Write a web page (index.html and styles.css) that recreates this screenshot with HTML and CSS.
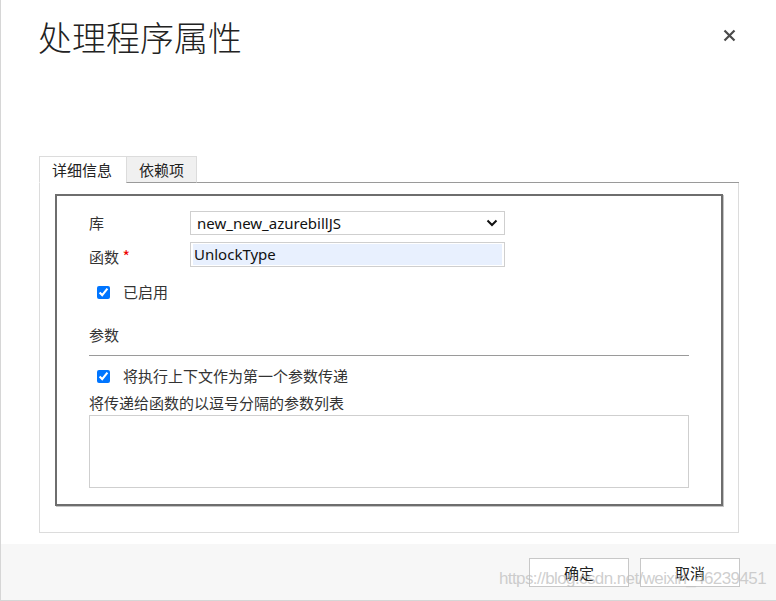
FILE: index.html
```html
<!DOCTYPE html>
<html lang="zh-CN">
<head>
  <meta charset="UTF-8">
  <meta name="viewport" content="width=device-width, initial-scale=1.0">
  <title>处理程序属性</title>
  <link rel="stylesheet" href="styles.css">
</head>
<body>
  <div class="dialog">
    <div class="header">
      <h1 class="title">处理程序属性</h1>
      <button class="close" title="关闭">
        <svg width="13" height="13" viewBox="0 0 13 13"><path d="M1.5 1.5 L11.5 11.5 M11.5 1.5 L1.5 11.5" stroke="#4a4a4a" stroke-width="2.2" fill="none"/></svg>
      </button>
    </div>

    <div class="content">
      <div class="tabs">
        <div class="tab active">详细信息</div>
        <div class="tab">依赖项</div>
        <div class="tab-fill"></div>
      </div>

      <div class="panel">
        <div class="group">
          <div class="row">
            <label class="field-label" for="library">库</label>
            <div class="select-box">
              <span id="library">new_new_azurebillJS</span>
              <svg width="12" height="8" viewBox="0 0 12 8"><path d="M1.5 1.5 L6 6 L10.5 1.5" stroke="#111" stroke-width="2" fill="none"/></svg>
            </div>
          </div>
          <div class="row row-func">
            <label class="field-label field-label-func" for="func">函数 <span class="req">*</span></label>
            <div class="text-box"><span id="func">UnlockType</span></div>
          </div>

          <label class="check check-enabled"><input type="checkbox" checked> 已启用</label>

          <div class="section-title">参数</div>
          <div class="rule"></div>

          <label class="check check-context"><input type="checkbox" checked> 将执行上下文作为第一个参数传递</label>
          <div class="hint">将传递给函数的以逗号分隔的参数列表</div>
          <textarea class="args"></textarea>
        </div>
      </div>
    </div>

    <div class="footer">
      <button class="btn">确定</button>
      <button class="btn">取消</button>
      <div class="watermark">https://blog.csdn.net/weixin_46239451</div>
    </div>
  </div>
</body>
</html>
```

FILE: styles.css
```css
body {
  margin: 0;
  font-family: "Noto Sans CJK SC", "Noto Sans", sans-serif;
  color: #333;
  background: #fff;
}
.dialog {
  width: 776px;
  height: 601px;
  box-sizing: border-box;
  border-left: 1px solid #d6d6d6;
  border-bottom: 1px solid #d6d6d6;
  display: flex;
  flex-direction: column;
  position: relative;
}
.header {
  display: flex;
  justify-content: space-between;
  align-items: flex-start;
  padding: 14px 40px 0 37px;
}
.title {
  margin: 0;
  font-size: 34px;
  font-weight: 300;
  line-height: 46px;
  color: #222;
}
.close {
  border: none;
  background: none;
  padding: 0;
  margin-top: 15px;
  cursor: pointer;
}
.content {
  padding: 0 37px 0 38px;
  margin-top: 96px;
}
.tabs {
  display: flex;
  height: 27px;
}
.tab {
  box-sizing: border-box;
  font-size: 15px;
  line-height: 25px;
  padding: 0 12px;
  border: 1px solid #dcdcdc;
  border-bottom: 1px solid #9a9a9a;
  background: #f0f0f0;
  color: #222;
}
.tab.active {
  background: #fff;
  border-bottom-color: #fff;
  width: 88px;
  margin-right: -1px;
}
.tab-fill {
  flex: 1;
  border-bottom: 1px solid #9a9a9a;
}
.panel {
  border: 1px solid #dcdcdc;
  border-top: none;
  padding: 11px 15px 26px 15px;
}
.group {
  border: 2px solid #6e6e6e;
  box-shadow: 1px 1px 0 #c4c4c4;
  padding: 15px 32px 15px 32px;
  height: 312px;
  box-sizing: border-box;
  display: flex;
  flex-direction: column;
}
.group > * {
  flex-shrink: 0;
}
.row {
  display: flex;
  align-items: center;
}
.row-func {
  margin-top: 7px;
}
.field-label {
  width: 101px;
  font-size: 15px;
  line-height: 20px;
  color: #333;
}
.field-label-func {
  padding-top: 4px;
}
.req {
  color: #e00;
  font-size: 16px;
}
.select-box, .text-box {
  box-sizing: border-box;
  width: 315px;
  border: 1px solid #cfcfcf;
  font-family: "Noto Sans", "Open Sans", sans-serif;
  font-size: 15px;
  color: #111;
}
.select-box {
  height: 24px;
  display: flex;
  align-items: center;
  justify-content: space-between;
  padding: 0 6px;
}
.text-box {
  height: 25px;
  padding: 1px 2px;
}
.text-box span {
  display: block;
  background: #e8f0fe;
  height: 21px;
  line-height: 21px;
  padding-left: 1px;
}
.check {
  display: flex;
  align-items: center;
  font-size: 15px;
  line-height: 20px;
  color: #333;
  padding-left: 5px;
}
.check input {
  width: 13px;
  height: 13px;
  margin: 0 13px 0 3px;
}
.check-enabled {
  margin-top: 15px;
}
.section-title {
  font-size: 15px;
  line-height: 20px;
  margin-top: 23px;
}
.rule {
  border-top: 1px solid #9a9a9a;
  margin-top: 10px;
}
.check-context {
  margin-top: 10px;
}
.hint {
  font-size: 15px;
  line-height: 20px;
  margin-top: 7px;
}
.args {
  margin-top: 2px;
  height: 73px;
  box-sizing: border-box;
  border: 1px solid #cfcfcf;
  resize: none;
}
.footer {
  margin-top: auto;
  height: 56px;
  background: #f7f7f7;
  display: flex;
  justify-content: flex-end;
  align-items: flex-start;
  gap: 11px;
  padding: 14px 36px 0 0;
  box-sizing: border-box;
  position: relative;
}
.btn {
  width: 100px;
  height: 29px;
  background: #fff;
  border: 1px solid #c8c8c8;
  font-family: "Noto Sans CJK SC", sans-serif;
  font-size: 15px;
  color: #222;
  padding: 0;
}
.watermark {
  position: absolute;
  right: 10px;
  top: 25px;
  font-family: "Liberation Sans", sans-serif;
  font-size: 17px;
  letter-spacing: -0.6px;
  color: rgba(190, 190, 190, 0.75);
  pointer-events: none;
}
```
